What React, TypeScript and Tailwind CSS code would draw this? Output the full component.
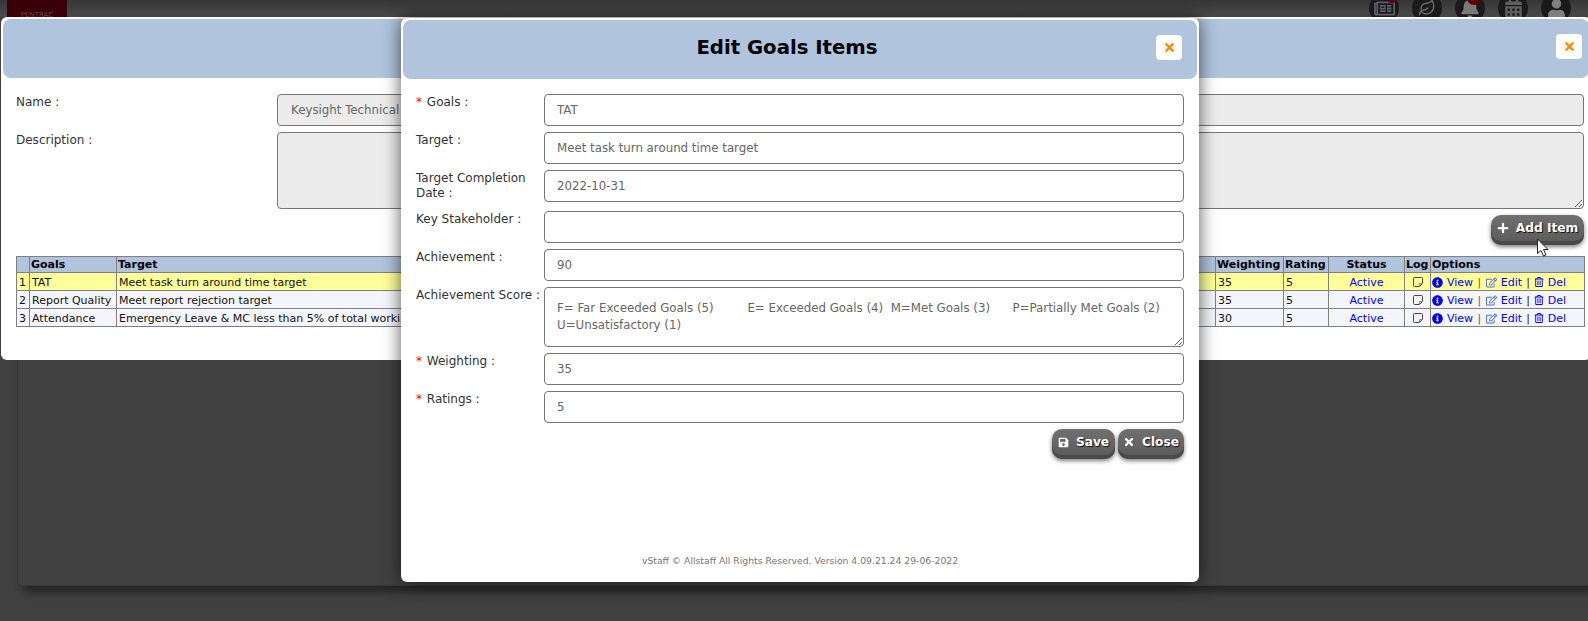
import React from 'react';
import { Leaf } from 'lucide-react';
import { FaBell, FaCalendarAlt, FaInfoCircle, FaPlus, FaRegEdit, FaRegNewspaper, FaRegTrashAlt, FaSave, FaTimes, FaUser } from 'react-icons/fa';

const font = { fontFamily: '"DejaVu Sans", Verdana, sans-serif' };

const CloseBtn = () => (
  <button className="w-[26px] h-[25px] bg-white rounded-[4px] flex items-center justify-center text-[#ff8c00]">
    <FaTimes className="text-[13px]" />
  </button>
);

const GrayBtn = ({ icon, label, className }: { icon: React.ReactNode; label: string; className: string }) => (
  <button className={`h-[30px] rounded-[10px] pb-[4px] flex items-center justify-center gap-[7px] font-bold text-[12.2px] text-white bg-gradient-to-b from-[#707070] to-[#5a5a5a] shadow-[inset_0_-4px_0_#4a4a4a,0_2px_4px_rgba(0,0,0,0.5)] [text-shadow:1px_1px_1px_#111] ${className}`}>
    {icon}
    {label}
  </button>
);

const NoteIcon = () => (
  <svg width="12" height="12" viewBox="0 0 12 12" className="mx-auto" fill="none">
    <path d="M2.5 1.5h7a1 1 0 0 1 1 1v5l-3 3h-5a1 1 0 0 1-1-1v-7a1 1 0 0 1 1-1z" stroke="#444" strokeWidth="1" />
    <path d="M7.5 10.5v-3h3" stroke="#a08a30" strokeWidth="1" />
  </svg>
);

const rows = [
  { n: 1, goal: 'TAT', target: 'Meet task turn around time target', weight: 35, hl: true },
  { n: 2, goal: 'Report Quality', target: 'Meet report rejection target', weight: 35, hl: false },
  { n: 3, goal: 'Attendance', target: 'Emergency Leave & MC less than 5% of total working days', weight: 30, hl: false },
];

const th = 'border border-[#808080] bg-[#b0c4de] font-bold text-black text-[11px] leading-[13px] px-[1px]';
const td = 'border border-[#808080] text-[11px] leading-[13px] px-[2px] pt-[1px] whitespace-nowrap overflow-hidden';

const GoalsTable = () => (
  <table className="w-[1568px] border-collapse table-fixed text-[#111]">
    <colgroup>
      <col className="w-[13px]" />
      <col className="w-[87px]" />
      <col className="w-[1099px]" />
      <col className="w-[68px]" />
      <col className="w-[45px]" />
      <col className="w-[76px]" />
      <col className="w-[26px]" />
      <col className="w-[154px]" />
    </colgroup>
    <thead>
      <tr className="h-[16px]">
        <th className={`${th} text-left`}></th>
        <th className={`${th} text-left`}>Goals</th>
        <th className={`${th} text-left`}>Target</th>
        <th className={`${th} text-left`}>Weighting</th>
        <th className={`${th} text-left`}>Rating</th>
        <th className={`${th} text-center`}>Status</th>
        <th className={`${th} text-left`}>Log</th>
        <th className={`${th} text-left`}>Options</th>
      </tr>
    </thead>
    <tbody>
      {rows.map((r) => (
        <tr key={r.n} className={`h-[18px] ${r.hl ? 'bg-[#ffff99]' : 'bg-[#f4f5fa]'}`}>
          <td className={td}>{r.n}</td>
          <td className={td}>{r.goal}</td>
          <td className={td}>{r.target}</td>
          <td className={td}>{r.weight}</td>
          <td className={td}>5</td>
          <td className={`${td} text-center text-[#0000ff]`}>Active</td>
          <td className={td}><NoteIcon /></td>
          <td className={`${td} text-[#0000ff]`}>
            <span className="flex items-center gap-[4px] -ml-[1px]">
              <FaInfoCircle className="text-[11px]" /> View
              <span className="text-[#8a5a00] mx-[0.5px]">|</span>
              <FaRegEdit className="text-[11px] text-[#4a6fd8]" /> Edit
              <span className="text-[#222]">|</span>
              <FaRegTrashAlt className="text-[10px]" /> Del
            </span>
          </td>
        </tr>
      ))}
    </tbody>
  </table>
);

const inputCls = 'block w-[640px] border border-[#767676] rounded-[4px] bg-white px-[12px] text-[11.8px] text-[#666] outline-none';

const FormRow = ({ label, req, value, gap }: { label: string; req?: boolean; value: string; gap: string }) => (
  <div className={`flex ${gap}`}>
    <label className="w-[128px] text-[12px] leading-[15px] text-[#333] pt-[1px]">
      {req && <span className="text-[#ff0000] mr-[1px]">* </span>}
      {label}
    </label>
    <input readOnly value={value} className={`${inputCls} h-[32px]`} />
  </div>
);

export default function App() {
  return (
    <div className="relative w-[1588px] h-[621px] overflow-hidden bg-[#404040]" style={font}>
      {/* page behind the overlay */}
      <div className="h-[17px] bg-gradient-to-b from-[#363636] to-[#4a4a4a] flex pl-[7px]">
        <div className="w-[60px] h-[17px] bg-[#3a0008] text-[7px] text-[#6b4048] text-center pt-[10px]">PENTRAC</div>
        <div className="ml-auto flex gap-[13px] pr-[17px] -mt-[7px]">
          <span className="w-[30px] h-[30px] rounded-full bg-[#1a1a1a] flex items-center justify-center relative">
            <FaRegNewspaper className="text-[21px] text-[#5e5e6a]" />
            <span className="absolute top-[-2px] right-[1px] w-[12px] h-[12px] rounded-full bg-[#5a0000]" />
          </span>
          <span className="w-[30px] h-[30px] rounded-full bg-[#1a1a1a] flex items-center justify-center"><Leaf size={18} className="text-[#6a6a6a]" /></span>
          <span className="w-[30px] h-[30px] rounded-full bg-[#1a1a1a] flex items-center justify-center relative">
            <FaBell className="text-[20px] text-[#7a7a7a]" />
            <span className="absolute top-[-2px] right-[4px] w-[14px] h-[14px] rounded-full bg-[#5a0000]" />
          </span>
          <span className="w-[30px] h-[30px] rounded-full bg-[#1a1a1a] flex items-center justify-center"><FaCalendarAlt className="text-[19px] text-[#5e5e5e]" /></span>
          <span className="w-[30px] h-[30px] rounded-full bg-[#1a1a1a] flex items-center justify-center"><FaUser className="text-[19px] text-[#808080]" /></span>
        </div>
      </div>
      <div className="ml-[17px] w-[1571px] h-[569px] rounded-bl-[4px] border-l border-b border-[#383838] shadow-[6px_6px_8px_rgba(0,0,0,0.45)]" />

      {/* parent window */}
      <div className="absolute left-[1px] top-[17px] w-[1590px] h-[343px] bg-white rounded-[6px] p-[2px] text-[12px] text-[#333]">
        <div className="h-[59px] bg-[#b0c4de] rounded-[8px]" />
        <div className="pl-[13px] pt-[16px]">
          <div className="flex">
            <label className="w-[261px] pt-[1px] leading-[15px]">Name :</label>
            <input readOnly value="Keysight Technical Support" className="w-[1307px] h-[32px] border border-[#767676] rounded-[4px] bg-[#ececec] px-[13px] text-[11.8px] text-[#666]" />
          </div>
          <div className="flex mt-[6px]">
            <label className="w-[261px] pt-[1px] leading-[15px]">Description :</label>
            <textarea readOnly className="w-[1307px] h-[77px] border border-[#767676] rounded-[4px] bg-[#ececec]" />
          </div>
          <div className="w-[1568px] flex justify-end mt-[6px]">
            <GrayBtn icon={<FaPlus className="text-[12px]" />} label="Add Item" className="w-[93px]" />
          </div>
          <div className="mt-[11px]">
            <GoalsTable />
          </div>
        </div>
        <div className="absolute left-[1555px] top-[17px]">
          <CloseBtn />
        </div>
      </div>

      {/* cursor */}
      <svg className="absolute left-[1536px] top-[238px]" width="14" height="20" viewBox="0 0 14 20">
        <path d="M1.5 1v14.5l3.5-3 2.5 5.5 2.5-1-2.5-5.5h4.5z" fill="#fff" stroke="#222" strokeWidth="1" />
      </svg>

      {/* edit dialog */}
      <div className="absolute left-[401px] top-[18px] w-[798px] h-[564px] bg-white rounded-[6px] p-[2px] shadow-[0_0_18px_rgba(0,0,0,0.65)] flex flex-col">
        <div className="h-[59px] bg-[#b0c4de] rounded-[8px] flex items-center justify-center relative">
          <h2 className="text-[19.7px] font-bold text-black pr-[26px] pb-[4px]">Edit Goals Items</h2>
          <div className="absolute right-[15px] top-[15px]">
            <CloseBtn />
          </div>
        </div>
        <div className="pl-[13px] pt-[15px] flex flex-col flex-1">
          <FormRow req label="Goals :" value="TAT" gap="mb-[6px]" />
          <FormRow label="Target :" value="Meet task turn around time target" gap="mb-[6px]" />
          <FormRow label="Target Completion Date :" value="2022-10-31" gap="mb-[9px]" />
          <FormRow label="Key Stakeholder :" value="" gap="mb-[6px]" />
          <FormRow label="Achievement :" value="90" gap="mb-[6px]" />
          <div className="flex mb-[6px]">
            <label className="w-[128px] text-[12px] leading-[15px] text-[#333] pt-[1px] whitespace-nowrap">Achievement Score :</label>
            <textarea
              readOnly
              className={`${inputCls} h-[60px] py-[12px] leading-[17px]`}
              value={'F= Far Exceeded Goals (5)\u00a0\u00a0\u00a0\u00a0\u00a0\u00a0\u00a0\u00a0\u00a0E= Exceeded Goals (4)\u00a0\u00a0M=Met Goals (3)\u00a0\u00a0\u00a0\u00a0\u00a0\u00a0P=Partially Met Goals (2)\nU=Unsatisfactory (1)'}
            />
          </div>
          <FormRow req label="Weighting :" value="35" gap="mb-[6px]" />
          <FormRow req label="Ratings :" value="5" gap="mb-[6px]" />
          <div className="w-[768px] flex justify-end gap-[3px]">
            <GrayBtn icon={<FaSave className="text-[11px]" />} label="Save" className="w-[63px]" />
            <GrayBtn icon={<FaTimes className="text-[12px]" />} label="Close" className="w-[66px]" />
          </div>
          <p className="mt-auto pb-[12px] pr-[13px] text-center text-[9.25px] text-[#777]">vStaff © Allstaff All Rights Reserved. Version 4.09.21.24 29-06-2022</p>
        </div>
      </div>
    </div>
  );
}
